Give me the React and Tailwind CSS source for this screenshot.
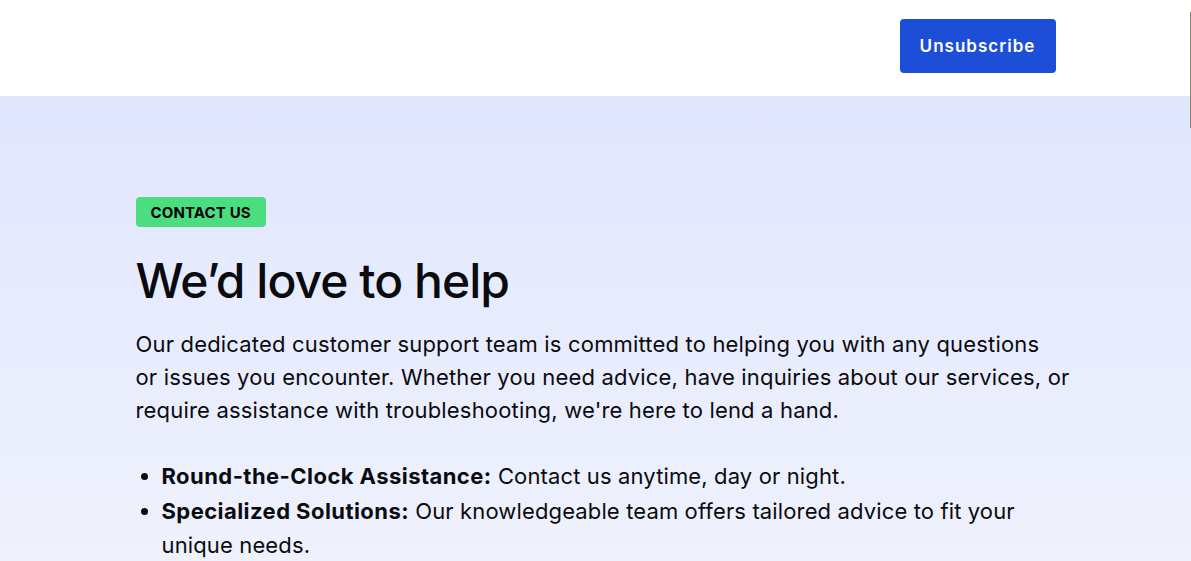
export default function App() {
  return (
    <div className="min-h-screen bg-white text-[#0b0b0f]" style={{ fontFamily: "Inter, 'Noto Sans', sans-serif" }}>
      <header className="relative h-[97px] border-b border-[#e5e7eb] bg-white">
        <div className="mx-auto flex h-full max-w-[920px] items-start justify-end pt-[19px]">
          <button className="h-[54px] w-[156px] rounded-[4px] bg-[#1d4ed8] pt-[2px] text-[17px] font-semibold tracking-[0.06em] text-white">
            Unsubscribe
          </button>
        </div>
        <span className="absolute right-0 top-3 h-[116px] w-px bg-[#8a8574]" />
      </header>

      <section className="min-h-[464px] bg-gradient-to-b from-[#e0e6fe] to-[#eff2fc] pt-[100px]">
        <div className="mx-auto max-w-[920px]">
          <span className="inline-flex h-[30px] items-center rounded-[4px] bg-[#4ade80] px-[15px] pt-[3px] text-[15px] font-bold tracking-[0.01em] text-black">
            CONTACT US
          </span>
          <h1 className="mt-6 text-[48px] font-medium leading-[60px] tracking-[-0.02em]">We’d love to help</h1>
          <p className="mt-[17px] w-[940px] text-[22px] leading-[33px] tracking-[0.008em]">
            Our dedicated customer support team is committed to helping you with any questions
            <br />
            or issues you encounter. Whether you need advice, have inquiries about our services, or
            <br />
            require assistance with troubleshooting, we're here to lend a hand.
          </p>
          <ul className="mt-[32px] list-disc pl-[26px] text-[22px] leading-[34.5px] tracking-[0.006em]">
            <li>
              <strong className="font-bold tracking-[0.02em]">Round-the-Clock Assistance:</strong> Contact us anytime, day or night.
            </li>
            <li>
              <strong className="font-bold tracking-[0.02em]">Specialized Solutions:</strong> Our knowledgeable team offers tailored advice to fit your unique needs.
            </li>
          </ul>
        </div>
      </section>
    </div>
  );
}
